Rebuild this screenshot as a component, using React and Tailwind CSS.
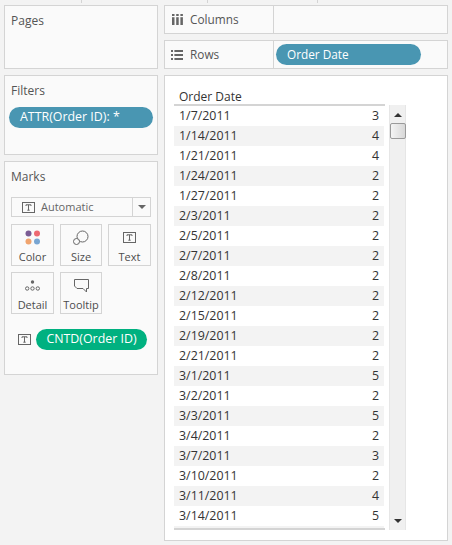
import React from 'react';

const ROWS = [
    ['1/7/2011', 3], ['1/14/2011', 4], ['1/21/2011', 4], ['1/24/2011', 2], ['1/27/2011', 2],
    ['2/3/2011', 2], ['2/5/2011', 2], ['2/7/2011', 2], ['2/8/2011', 2], ['2/12/2011', 2],
    ['2/15/2011', 2], ['2/19/2011', 2], ['2/21/2011', 2], ['3/1/2011', 5], ['3/2/2011', 2],
    ['3/3/2011', 5], ['3/4/2011', 2], ['3/7/2011', 3], ['3/10/2011', 2], ['3/11/2011', 4],
    ['3/14/2011', 5], ['3/15/2011', 2],
];

const Card = ({ className = '', children }) => (
    <div className={`border border-[#d4d4d4] bg-[#fafafa] ${className}`}>{children}</div>
);

const TextIcon = () => (
    <svg width="13" height="11" viewBox="0 0 13 11" fill="none" stroke="#666">
        <rect x="0.5" y="0.5" width="12" height="10" />
        <path d="M4 4V2.8H9V4M6.5 2.8V8.2M5.3 8.2H7.7" />
    </svg>
);

const MarkButton = ({ label, children }) => (
    <div className="flex h-[42px] flex-col items-center border border-[#d4d4d4] bg-[#fafafa]">
        <div className="flex h-[25px] items-center">{children}</div>
        <span className="-mt-px text-[11px] leading-[15px] text-[#4d4d4d]">{label}</span>
    </div>
);

const App = () => {
    return (
        <div className="h-[545px] w-[452px] overflow-hidden bg-[#f3f3f3] font-['Open_Sans',sans-serif] text-[12px]">
            <div className="flex h-[5px] items-start">
                <div className="ml-[81px] h-[3px] w-[126px] border-l border-[#d4d4d4]" />
                <div className="h-[3px] w-[110px] border-l border-[#d4d4d4]" />
                <div className="h-[3px] border-l border-[#d4d4d4]" />
            </div>
            <div className="flex gap-[6px] pl-1">
                <div className="flex w-[154px] flex-col gap-[6px]">
                    <Card className="h-[64px] px-[6px] pt-[6px] text-[#555]">
                        <div className="leading-[18px]">Pages</div>
                    </Card>
                    <Card className="h-[80px] pt-[6px] text-[#555]">
                        <div className="px-[6px] leading-[18px]">Filters</div>
                        <div className="ml-[4px] mt-[7px] flex h-[21px] w-[144px] items-center rounded-full bg-[#4996b2] pl-[11px] text-[12.4px] text-white">
                            ATTR(Order ID): *
                        </div>
                    </Card>
                    <Card className="h-[214px] pt-[6px] text-[#555]">
                        <div className="px-[6px] leading-[18px]">Marks</div>
                        <div className="ml-[6px] mt-[11px] flex h-[20px] w-[140px] items-center border border-[#d4d4d4] bg-[#fafafa]">
                            <div className="flex flex-1 items-center gap-[6px] pl-[10px] pt-px text-[#666]">
                                <TextIcon />
                                <span className="text-[11px]">Automatic</span>
                            </div>
                            <div className="flex h-full w-[18px] items-center justify-center border-l border-[#d4d4d4]">
                                <div className="h-0 w-0 border-x-[4px] border-t-[4px] border-x-transparent border-t-[#666]" />
                            </div>
                        </div>
                        <div className="ml-[6px] mt-[7px] grid w-[140px] grid-cols-[43px_42px_43px] gap-x-[6px] gap-y-[6px]">
                            <MarkButton label="Color">
                                <svg width="16" height="15" viewBox="0 0 16 15">
                                    <circle cx="3.5" cy="3.5" r="3" fill="#7b5c94" />
                                    <circle cx="12" cy="3.5" r="3" fill="#ee6a72" />
                                    <circle cx="3.5" cy="11.5" r="3" fill="#f0a46e" />
                                    <circle cx="12" cy="11.5" r="3" fill="#79a6d2" />
                                </svg>
                            </MarkButton>
                            <MarkButton label="Size">
                                <svg width="16" height="15" viewBox="0 0 16 15" fill="none" stroke="#666">
                                    <circle cx="9.5" cy="6.5" r="5.5" fill="#fafafa" />
                                    <circle cx="3.5" cy="11.5" r="3" fill="#fafafa" />
                                </svg>
                            </MarkButton>
                            <MarkButton label="Text">
                                <TextIcon />
                            </MarkButton>
                            <MarkButton label="Detail">
                                <svg width="15" height="11" viewBox="0 0 15 11" fill="none" stroke="#666">
                                    <circle cx="7.5" cy="2" r="1.7" fill="#666" stroke="none" />
                                    <circle cx="2.2" cy="8.5" r="1.7" />
                                    <circle cx="7.5" cy="8.5" r="1.7" />
                                    <circle cx="12.8" cy="8.5" r="1.7" />
                                </svg>
                            </MarkButton>
                            <MarkButton label="Tooltip">
                                <svg width="15" height="14" viewBox="0 0 15 14" fill="none" stroke="#666">
                                    <path d="M0.5 0.5H14.5V9.5H12.5V13L9 9.5H3L0.5 7Z" />
                                </svg>
                            </MarkButton>
                        </div>
                        <div className="ml-[13px] mt-[15px] flex items-center gap-[5px]">
                            <TextIcon />
                            <div className="flex h-[21px] w-[111px] items-center justify-center rounded-full bg-[#00b180] text-[12.4px] text-white">
                                CNTD(Order ID)
                            </div>
                        </div>
                    </Card>
                </div>
                <div className="flex w-[284px] flex-col gap-[6px]">
                    <Card className="flex h-[29px] items-center text-[#555]">
                        <div className="flex h-full w-[109px] items-center gap-[7px] border-r border-[#d4d4d4] pl-[7px] text-[11.8px]">
                            <svg width="11" height="11" viewBox="0 0 11 11" fill="#666">
                                <rect x="0" y="0" width="2.5" height="2" />
                                <rect x="4.2" y="0" width="2.5" height="2" />
                                <rect x="8.4" y="0" width="2.5" height="2" />
                                <rect x="0" y="3.2" width="2.5" height="7.8" />
                                <rect x="4.2" y="3.2" width="2.5" height="7.8" />
                                <rect x="8.4" y="3.2" width="2.5" height="7.8" />
                            </svg>
                            <span>Columns</span>
                        </div>
                    </Card>
                    <Card className="flex h-[29px] items-center text-[#555]">
                        <div className="flex h-full w-[109px] items-center gap-[7px] border-r border-[#d4d4d4] pl-[6px] text-[11.8px]">
                            <svg width="12" height="10" viewBox="0 0 12 10" fill="#666">
                                <rect x="0" y="0" width="2" height="2" />
                                <rect x="3.4" y="0" width="8.6" height="2" />
                                <rect x="0" y="4" width="2" height="2" />
                                <rect x="3.4" y="4" width="8.6" height="2" />
                                <rect x="0" y="8" width="2" height="2" />
                                <rect x="3.4" y="8" width="8.6" height="2" />
                            </svg>
                            <span>Rows</span>
                        </div>
                        <div className="ml-[2px] flex h-[21px] w-[145px] items-center rounded-full bg-[#4996b2] pl-[11px] text-[11.8px] text-white">
                            Order Date
                        </div>
                    </Card>
                    <Card className="flex h-[466px] items-start bg-white pl-[9px] pt-[13px]">
                        <div className="w-[211px]">
                            <div className="h-[17px] border-b-2 border-[#d4d4d4] pl-[5px] text-[12px] leading-[15px] text-[#333]">
                                Order Date
                            </div>
                            <div className="h-[424px] overflow-hidden border-b-2 border-[#d4d4d4]">
                                {ROWS.map(([date, count], i) => (
                                    <div
                                        key={date}
                                        className={`flex h-[20px] w-[210px] items-center justify-between pl-[5px] pr-[5px] text-[12.4px] text-[#333] ${i % 2 === 1 ? 'bg-[#f3f3f3]' : 'bg-white'}`}
                                    >
                                        <span>{date}</span>
                                        <span>{count}</span>
                                    </div>
                                ))}
                            </div>
                        </div>
                        <div className="ml-[4px] mt-[16px] flex h-[425px] w-[17px] flex-col items-center border-x border-[#e6e6e6] bg-[#f0f0f0]">
                            <div className="mt-[8px] h-0 w-0 border-x-[4px] border-b-[4px] border-x-transparent border-b-[#333]" />
                            <div className="mt-[6px] h-[16px] w-[16px] rounded-[2px] border border-[#9a9a9a] bg-gradient-to-r from-[#f4f4f4] to-[#d8d8d8]" />
                            <div className="mt-auto mb-[7px] h-0 w-0 border-x-[4px] border-t-[4px] border-x-transparent border-t-[#333]" />
                        </div>
                    </Card>
                </div>
            </div>
        </div>
    );
};

export default App;
